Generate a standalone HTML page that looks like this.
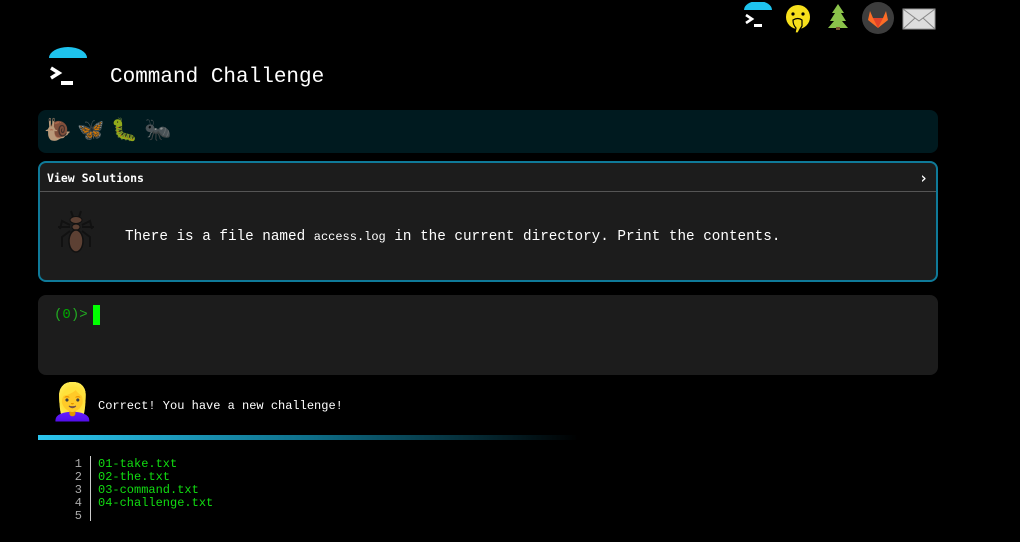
<!DOCTYPE html>
<html><head><meta charset="utf-8"><style>
*{margin:0;padding:0;box-sizing:border-box}
body{width:1020px;height:542px;background:#000;color:#fff;font-family:"Liberation Mono","DejaVu Sans Mono",monospace;position:relative;overflow:hidden}
.abs{position:absolute}
.bar{left:38px;top:110px;width:900px;height:43px;background:#001a1f;border-radius:8px}
.panel{left:38px;top:161px;width:900px;height:121px;background:#1c1c1c;border:2px solid #0f7a99;border-radius:8px}
.hdr{height:29px;border-bottom:1px solid #555;font-family:"DejaVu Sans Mono",monospace;font-weight:bold;font-size:11.5px;line-height:30px;padding-left:7px;position:relative}
.term{left:38px;top:295px;width:900px;height:80px;background:#1c1c1c;border-radius:8px}
</style></head><body>
<svg class="abs" style="left:742px;top:2px" width="32" height="30" viewBox="0 0 32 30"><path d="M2 8 A14 9 0 0 1 30 8 Z" fill="#1ec3ee"/><path d="M4 13 l6 4 -6 4" stroke="#fff" stroke-width="2.6" fill="none"/><rect x="12" y="22" width="8" height="3" fill="#fff"/></svg>
<svg class="abs" style="left:784px;top:4px" width="28" height="30" viewBox="0 0 28 30"><circle cx="14" cy="13" r="12" fill="#f7e01c"/><circle cx="9" cy="10" r="1.6" fill="#000"/><circle cx="19" cy="10" r="1.6" fill="#000"/><path d="M9 16 q5 -3 9 0 v6 q-2 3 -4 7 h-3 l1 -5 q-3 -3 -3 -8z" fill="#f7e01c" stroke="#000" stroke-width="1.2"/></svg>
<svg class="abs" style="left:826px;top:3px" width="24" height="28" viewBox="0 0 24 28"><path d="M12 1 L18 10 H15 L20 18 H16 L22 25 H2 L8 18 H4 L9 10 H6Z" fill="#8bc34a"/><rect x="10" y="24" width="4" height="3" fill="#7a5230"/></svg>
<svg class="abs" style="left:861px;top:1px" width="34" height="34" viewBox="0 0 34 34"><circle cx="17" cy="17" r="16" fill="#3d3d3d"/><path d="M17 27 L7 19 L9 10 L12 17 H22 L25 10 L27 19Z" fill="#fc6d26"/><path d="M17 27 L12 17 H22Z" fill="#e24329"/></svg>
<svg class="abs" style="left:902px;top:8px" width="34" height="22" viewBox="0 0 34 22"><rect x="1" y="1" width="32" height="20" fill="#ddd" stroke="#999"/><path d="M1 1 L17 13 L33 1 M1 21 L13 10 M33 21 L21 10" stroke="#888" fill="none"/></svg>
<svg class="abs" style="left:46px;top:47px" width="44" height="44" viewBox="0 0 44 44"><path d="M3 11 A19 11 0 0 1 41 11 Z" fill="#1ec3ee"/><path d="M5 21 l8 5 -8 5" stroke="#fff" stroke-width="3.5" fill="none"/><rect x="15" y="34" width="12" height="4" fill="#fff"/></svg>
<div class="abs" style="left:110px;top:66px;font-size:21px">Command Challenge</div>
<div class="abs bar"></div>
<div class="abs" style="left:44px;top:118px;font-size:22px;letter-spacing:6px;line-height:28px;opacity:.8">🐌🦋🐛🐜</div>
<div class="abs panel"><div class="hdr">View Solutions<span style="position:absolute;right:8px;top:0;font-size:15px">›</span></div>
<svg class="abs" style="left:16px;top:46px" width="40" height="46" viewBox="0 0 40 46"><g stroke="#111" stroke-width="2" fill="none"><path d="M17 8 l-2 -6 M23 8 l2 -6 M14 16 l-8 -4 -2 8 M26 16 l8 -4 2 8 M14 18 h-12 M26 18 h12 M14 22 l-8 6 v10 M26 22 l8 6 v10"/></g><ellipse cx="20" cy="11" rx="6" ry="3.5" fill="#5c4033" stroke="#111"/><ellipse cx="20" cy="18" rx="4" ry="3" fill="#5c4033" stroke="#111"/><ellipse cx="20" cy="32" rx="7" ry="11" fill="#5c4033" stroke="#111" stroke-width="1.5"/></svg>
<div class="abs" style="left:85px;top:66px;font-size:14.3px;white-space:nowrap">There is a file named <span style="font-size:12px">access.log</span> in the current directory. Print the contents.</div></div>
<div class="abs term"><div class="abs" style="left:16px;top:12px;font-size:14px;color:#2a2">(<span style="color:#0a0">0</span>)&gt;</div><div class="abs" style="left:55px;top:10px;width:7px;height:20px;background:#0f0"></div></div>
<div class="abs" style="left:50px;top:382px;font-size:36px;line-height:46px">👱‍♀️</div>
<div class="abs" style="left:98px;top:399px;font-size:12px">Correct! You have a new challenge!</div>
<div class="abs" style="left:38px;top:435px;width:540px;height:5px;background:linear-gradient(90deg,#2cc6ef,#0e6f8a 50%,#000)"></div>
<div class="abs" style="left:60px;top:458px;font-size:12px;line-height:13px;color:#aaa;text-align:right;width:22px">1<br>2<br>3<br>4<br>5</div>
<div class="abs" style="left:90px;top:456px;width:1px;height:65px;background:#ccc"></div>
<div class="abs" style="left:98px;top:458px;font-size:12px;line-height:13px;color:#1d1">01-take.txt<br>02-the.txt<br>03-command.txt<br>04-challenge.txt</div>
</body></html>
